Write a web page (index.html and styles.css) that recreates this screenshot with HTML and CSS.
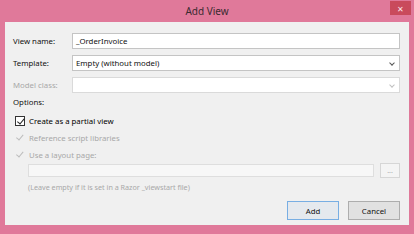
FILE: index.html
```html
<!DOCTYPE html>
<html lang="en">
<head>
    <meta charset="UTF-8">
    <title>Add View</title>
    <link rel="stylesheet" href="styles.css">
</head>
<body>
    <div class="window">
        <div class="titlebar">
            <span class="title">Add View</span>
            <div class="close">&#x2715;</div>
        </div>
        <div class="client">
            <div class="fields">
                <label class="label">View name:</label>
                <div class="input">_OrderInvoice</div>

                <label class="label">Template:</label>
                <div class="input select">Empty (without model)<span class="arrow"></span></div>

                <label class="label disabled">Model class:</label>
                <div class="input select off"><span class="arrow"></span></div>
            </div>

            <div class="options">Options:</div>
            <div class="check"><span class="box on"></span>Create as a partial view</div>
            <div class="check disabled"><span class="box dim"></span>Reference script libraries</div>
            <div class="check disabled"><span class="box dim"></span>Use a layout page:</div>

            <div class="layout-row">
                <div class="input layout"></div>
                <div class="browse">...</div>
            </div>
            <div class="hint">(Leave empty if it is set in a Razor _viewstart file)</div>

            <div class="buttons">
                <button class="btn default">Add</button>
                <button class="btn">Cancel</button>
            </div>
        </div>
    </div>
</body>
</html>
```

FILE: styles.css
```css
body {
    margin: 0;
    font-family: 'Noto Sans', sans-serif;
    font-size: 7.8px;
}
.window {
    width: 414px;
    height: 234px;
    box-sizing: border-box;
    background: #e0799a;
    padding: 0 5px 9px 5px;
    display: flex;
    flex-direction: column;
}
.titlebar {
    height: 22px;
    position: relative;
    display: flex;
    align-items: center;
    justify-content: center;
}
.title {
    font-size: 10px;
    color: #3a2a30;
}
.close {
    position: absolute;
    right: -2px;
    top: 1px;
    width: 21px;
    height: 14px;
    background: #c94a5c;
    color: #fbe3e8;
    font-size: 8px;
    display: flex;
    align-items: center;
    justify-content: center;
}
.client {
    flex: 1;
    background: #f0f0f0;
    padding: 11px 9px 0 8px;
    display: flex;
    flex-direction: column;
}
.fields {
    display: grid;
    grid-template-columns: 59px 1fr;
    grid-auto-rows: 16px;
    row-gap: 6px;
    align-items: center;
}
.label {
    color: #111;
}
.disabled {
    color: #a8a8a8;
}
.input {
    height: 16px;
    box-sizing: border-box;
    background: #fff;
    border: 1px solid #c4c4c4;
    padding-left: 3px;
    display: flex;
    align-items: center;
    position: relative;
    color: #111;
}
.input.off {
    border-color: #dadada;
}
.arrow {
    position: absolute;
    right: 5px;
    top: 5px;
    width: 3px;
    height: 3px;
    border-right: 1px solid #555;
    border-bottom: 1px solid #555;
    transform: rotate(45deg);
}
.off .arrow {
    border-color: #c0c0c0;
}
.options {
    margin-top: 3px;
    line-height: 12px;
    color: #111;
}
.check {
    height: 17px;
    display: flex;
    align-items: center;
    padding-left: 2px;
}
.box {
    width: 10px;
    height: 10px;
    box-sizing: border-box;
    margin-right: 4px;
    position: relative;
}
.box.on {
    border: 1px solid #333;
    background: #fff;
}
.box::after {
    content: '';
    position: absolute;
    left: 2.5px;
    top: 0;
    width: 2.5px;
    height: 5.5px;
    border-right: 1.3px solid #222;
    border-bottom: 1.3px solid #222;
    transform: rotate(40deg);
}
.box.dim::after {
    border-color: #bcbcbc;
}
.options + .check {
    margin-top: 4px;
}
.layout-row {
    display: flex;
    gap: 6px;
    align-items: center;
    padding-left: 15px;
}
.input.layout {
    flex: 1;
    height: 13px;
    background: #f7f7f7;
    border-color: #dedede;
}
.browse {
    width: 20px;
    height: 15px;
    box-sizing: border-box;
    border: 1px solid #d6d6d6;
    background: #f4f4f4;
    color: #aaa;
    font-size: 7px;
    display: flex;
    align-items: center;
    justify-content: center;
}
.hint {
    padding-left: 15px;
    margin-top: 3px;
    line-height: 12px;
    font-size: 7.2px;
    color: #a8a8a8;
}
.buttons {
    display: flex;
    justify-content: flex-end;
    gap: 9px;
    margin-top: 8px;
}
.btn {
    width: 52px;
    height: 19px;
    font-family: inherit;
    font-size: 7.8px;
    color: #111;
    background: #e1e1e1;
    border: 1px solid #adadad;
    padding: 0;
}
.btn.default {
    border-color: #78aee3;
    background: #e5e9ee;
}
```
